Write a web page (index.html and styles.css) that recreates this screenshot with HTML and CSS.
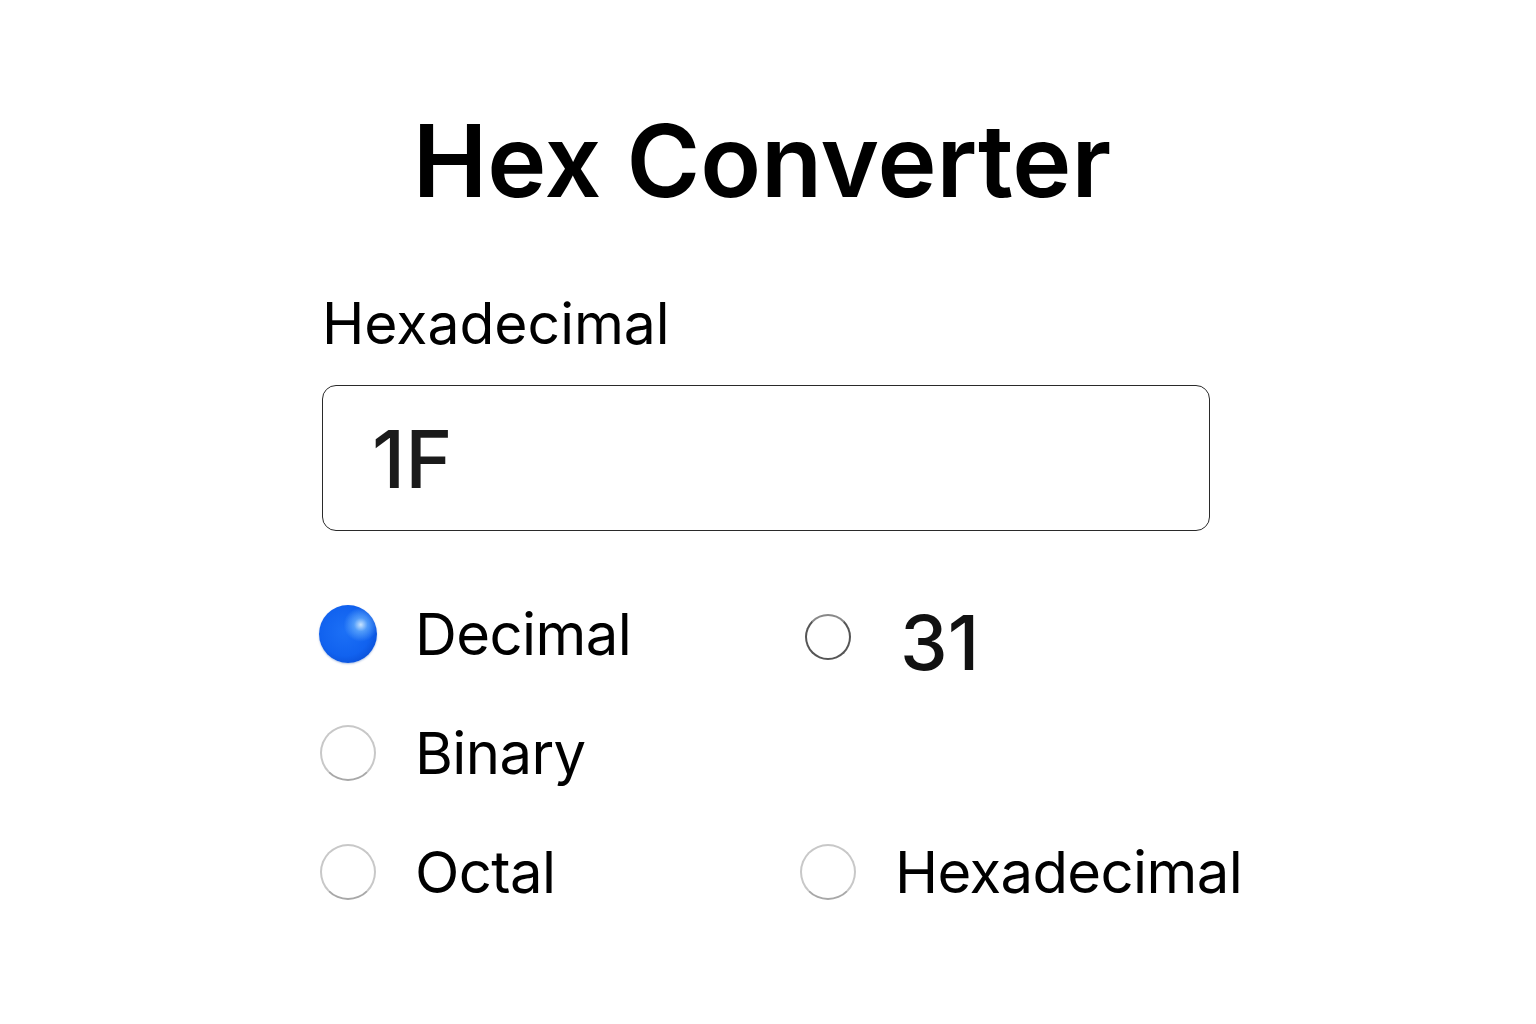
FILE: index.html
```html
<!DOCTYPE html>
<html lang="en">
<head>
<meta charset="utf-8">
<title>Hex Converter</title>
<link rel="stylesheet" href="styles.css">
</head>
<body>
<main class="converter">
  <h1 class="title">Hex Converter</h1>
  <label class="field-label" for="hex">Hexadecimal</label>
  <div class="input-box" id="hex">1F</div>
  <div class="options">
    <div class="option">
      <span class="radio-slot"><span class="radio radio-on"></span></span>
      <span class="option-text">Decimal</span>
    </div>
    <div class="option">
      <span class="radio-slot"><span class="radio radio-small"></span></span>
      <span class="option-text option-value">31</span>
    </div>
    <div class="option">
      <span class="radio-slot"><span class="radio"></span></span>
      <span class="option-text">Binary</span>
    </div>
    <div class="option"></div>
    <div class="option">
      <span class="radio-slot"><span class="radio"></span></span>
      <span class="option-text">Octal</span>
    </div>
    <div class="option">
      <span class="radio-slot"><span class="radio"></span></span>
      <span class="option-text">Hexadecimal</span>
    </div>
  </div>
</main>
</body>
</html>
```
FILE: styles.css
```css
html, body {
  margin: 0;
  padding: 0;
  background: #ffffff;
}
body {
  font-family: Inter, "Noto Sans", "Liberation Sans", sans-serif;
  color: #000;
}
.converter {
  width: 888px;
  margin: 0 0 0 322px;
  padding-top: 111px;
  display: flex;
  flex-direction: column;
}
.title {
  margin: 0;
  padding-right: 8px;
  font-size: 100px;
  line-height: 1;
  font-weight: 600;
  text-align: center;
  color: #000;
}
.field-label {
  margin-top: 84px;
  font-size: 57px;
  line-height: 1;
  font-weight: 400;
  color: #000;
}
.input-box {
  margin-top: 33px;
  height: 144px;
  border: 1px solid #2a2a2a;
  border-radius: 14px;
  padding-left: 49px;
  display: flex;
  align-items: center;
  font-size: 80px;
  font-weight: 500;
  color: #1a1a1a;
  box-sizing: content-box;
}
.options {
  margin-top: 43px;
  display: grid;
  grid-template-columns: 480px 1fr;
  grid-auto-rows: 119px;
  margin-left: -3px;
}
.option {
  display: flex;
  align-items: center;
  gap: 38px;
}
.radio-slot {
  width: 58px;
  height: 58px;
  display: flex;
  align-items: center;
  justify-content: center;
  flex: none;
}
.radio {
  width: 56px;
  height: 56px;
  border-radius: 50%;
  box-sizing: border-box;
  border: 2px solid #c8c8c8;
  border-bottom-color: #a8a8a8;
  background: #fff;
}
.radio-small {
  width: 46px;
  height: 46px;
  border: 2px solid #555;
  border-top-color: #888;
  margin-top: 6px;
}
.radio-on {
  width: 58px;
  height: 58px;
  border: none;
  background:
    radial-gradient(circle at 72% 34%, rgba(210,235,255,0.95) 0, rgba(120,190,255,0.6) 12%, rgba(30,120,255,0) 30%),
    radial-gradient(circle at 45% 45%, #1c70f6 0, #1162ef 55%, #0a50d8 78%, #0a80ff 92%, #22b0ff 100%);
  box-shadow: 0 1px 2px rgba(0,60,160,0.3);
}
.option-text {
  font-size: 58px;
  line-height: 1;
  font-weight: 400;
  letter-spacing: -0.6px;
  color: #000;
}
.option-value {
  font-size: 76px;
  font-weight: 500;
  letter-spacing: 0;
  color: #111;
  margin-top: 16px;
  margin-left: 5px;
}
```
